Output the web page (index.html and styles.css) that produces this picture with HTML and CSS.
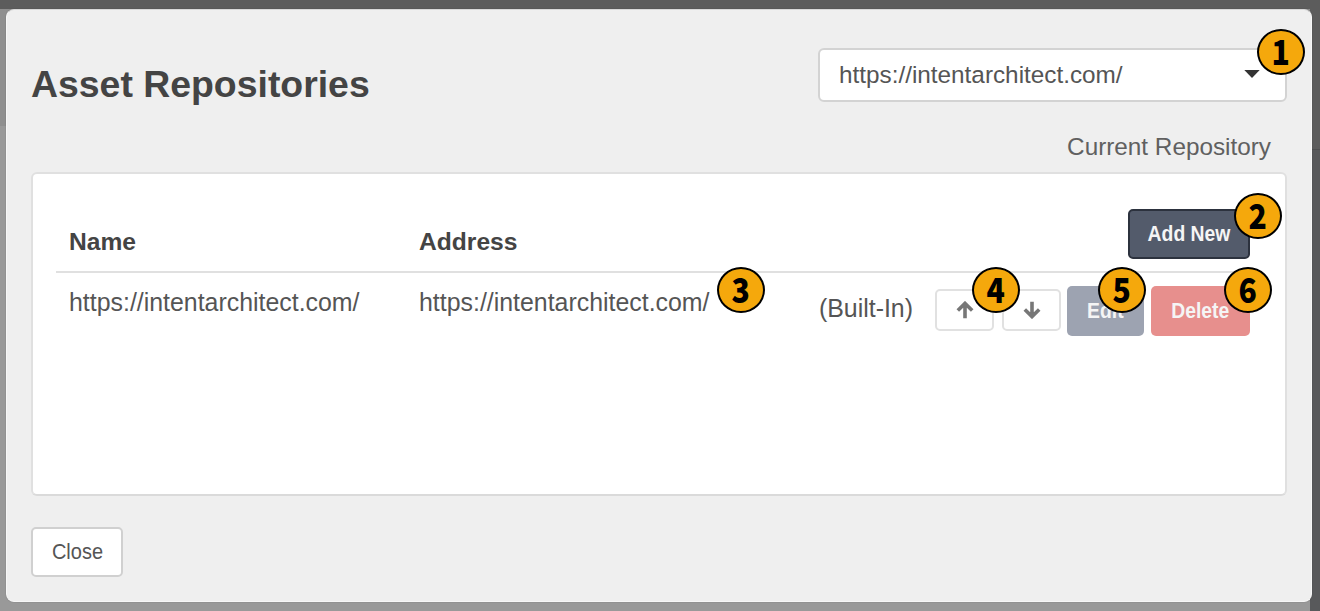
FILE: index.html
```
<!DOCTYPE html>
<html lang="en">
<head>
<meta charset="utf-8">
<title>Asset Repositories</title>
<link rel="stylesheet" href="styles.css">
</head>
<body>
<main class="modal">
  <header class="modal-header">
    <h1 class="title">Asset Repositories</h1>
    <div class="current">
      <div class="select">
        <span class="select-value">https://intentarchitect.com/</span>
        <svg class="caret" width="16" height="8" viewBox="0 0 16 8"><path d="M0.3 0H15.7L8 8Z" fill="#333"/></svg>
        <span class="badge badge-select"><b>1</b></span>
      </div>
      <div class="caption">Current Repository</div>
    </div>
  </header>
  <section class="panel">
    <div class="row head">
      <div class="cell th">Name</div>
      <div class="cell th">Address</div>
      <div class="actions">
        <button class="btn btn-primary"><span>Add New</span></button>
        <span class="badge badge-add"><b>2</b></span>
      </div>
    </div>
    <div class="row body-row">
      <div class="cell">https://intentarchitect.com/</div>
      <div class="cell address">https://intentarchitect.com/<span class="badge badge-address"><b>3</b></span></div>
      <div class="actions">
        <span class="builtin">(Built-In)</span>
        <span class="slot slot-up"><button class="btn btn-icon" aria-label="Move up"><svg width="18" height="18" viewBox="0 0 18 18"><path d="M9 17.2V3M1.8 9.6L9 2.4L16.2 9.6" fill="none" stroke="#777" stroke-width="3.6"/></svg></button><span class="badge badge-move"><b>4</b></span></span>
        <span class="slot slot-down"><button class="btn btn-icon" aria-label="Move down"><svg width="18" height="18" viewBox="0 0 18 18"><path d="M9 .8V15M1.8 8.4L9 15.6L16.2 8.4" fill="none" stroke="#777" stroke-width="3.6"/></svg></button></span>
        <span class="slot slot-edit"><button class="btn btn-edit"><span>Edit</span></button><span class="badge badge-edit"><b>5</b></span></span>
        <span class="slot"><button class="btn btn-delete"><span>Delete</span></button><span class="badge badge-delete"><b>6</b></span></span>
      </div>
    </div>
  </section>
  <footer><button class="btn btn-close"><span>Close</span></button></footer>
</main>
</body>
</html>
```
FILE: styles.css
```
* { box-sizing: border-box; }
body {
  margin: 0;
  width: 1320px;
  height: 611px;
  padding: 9px 8px 10px 6px;
  overflow: hidden;
  font-family: "Liberation Sans", Arial, sans-serif;
  color: #555;
  background:
    linear-gradient(#5c5c5c, #5c5c5c) 0 0 / 1320px 9px no-repeat,
    linear-gradient(#4e4f50, #4e4f50) 1310px 149px / 10px 1px no-repeat,
    linear-gradient(#5c5c5c, #5c5c5c) 1310px 0 / 10px 149px no-repeat,
    linear-gradient(#58595b, #58595b) 1310px 0 / 10px 611px no-repeat,
    linear-gradient(#8f8f8f, #8f8f8f) 0 0 / 1310px 126px no-repeat,
    #999;
}
.modal {
  height: 593px;
  padding: 38px 24px 24px 24px;
  border: 1px solid #f7f7f7;
  border-top-color: #d8d8d8;
  border-radius: 8px;
  background: #efefef;
  box-shadow: 0 0 1px rgba(0, 0, 0, .45);
}
.modal-header { display: flex; justify-content: space-between; height: 124px; }
.title {
  margin: 15px 0 0;
  font-size: 37.4px;
  line-height: 42px;
  font-weight: bold;
  color: #444;
  white-space: nowrap;
}
.current { width: 469px; }
.select {
  position: relative;
  display: flex;
  align-items: center;
  justify-content: space-between;
  height: 54px;
  padding: 0 25px 0 19px;
  border: 2px solid #d3d3d3;
  border-radius: 6px;
  background: #fff;
  font-size: 24.3px;
}
.caret { margin-top: -2px; }
.caption {
  padding: 31px 16px 0 0;
  font-size: 24.3px;
  line-height: 28px;
  text-align: right;
  color: #606060;
}
.panel {
  height: 324px;
  padding: 28px 24px 28px 23px;
  border: 2px solid #e0e0e0;
  border-bottom-color: #dadada;
  border-radius: 6px;
  background: #fff;
}
.row { display: grid; grid-template-columns: 350px 350px 1fr; padding: 0 11px 0 13px; }
.head { height: 71px; padding-top: 7px; border-bottom: 2px solid #e0e0e0; }
.cell { font-size: 24.9px; line-height: 28px; white-space: nowrap; }
.th { margin-top: 19px; font-size: 24.6px; font-weight: bold; color: #444; }
.body-row { padding-top: 13px; }
.body-row .cell { margin-top: 2px; }
.address { position: relative; }
.actions { position: relative; display: flex; justify-content: flex-end; align-items: flex-start; }
.builtin { margin: 8px 22px 0 0; font-size: 24.9px; line-height: 28px; white-space: nowrap; }
.slot { position: relative; display: flex; }
.slot-up { margin-right: 8px; }
.slot-down { margin-right: 6px; }
.slot-edit { margin-right: 7px; }
.btn {
  display: flex;
  align-items: center;
  justify-content: center;
  height: 50px;
  padding: 0 0 1px;
  border-radius: 5px;
  border: 2px solid transparent;
  font: bold 21.5px/24px "Liberation Sans", Arial, sans-serif;
  color: #f5f5f5;
  white-space: nowrap;
}
.btn > span { transform: scaleX(.9); }
.btn-primary { width: 122px; background: #535b6b; border-color: #2c323e; }
.btn-icon { width: 59px; height: 42px; margin-top: 3px; padding: 0; background: #fff; border-color: #e1e1e1; }
.btn-edit { width: 77px; background: #9da3b1; border: 0; }
.btn-delete { width: 99px; background: #e78f8d; border: 0; }
.btn-close { width: 92px; background: #fff; border-color: #d0d0d0; color: #555; font-weight: normal; }
.btn-close > span { transform: scaleX(.93); }
footer { padding-top: 31px; }
.badge {
  position: absolute;
  z-index: 2;
  display: flex;
  align-items: center;
  justify-content: center;
  width: 48px;
  height: 46px;
  border: 2px solid #000;
  border-radius: 50%;
  background: #f5a80c;
  color: #000;
}
.badge b {
  font: 900 35px/40px "Noto Sans CJK SC", "Open Sans", sans-serif;
  margin-top: -4px;
  transform: scaleX(.86);
}
.badge-select { right: -20px; top: -21px; }
.badge-add { right: -32px; top: -16px; }
.badge-address { left: 298px; top: -21px; }
.badge-move { left: 37px; top: -19px; }
.badge-edit { left: 31px; top: -19px; }
.badge-delete { left: 73px; top: -19px; }
```
